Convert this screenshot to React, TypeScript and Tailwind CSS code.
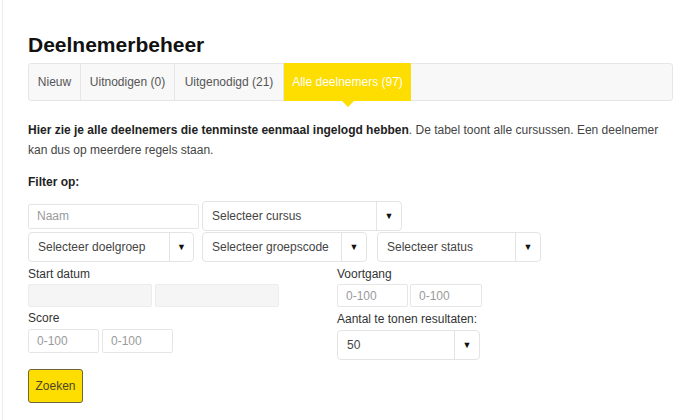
const font = { fontFamily: '"Liberation Sans", Arial, sans-serif' };

function Caret() {
  return <span className="text-[9px] leading-none text-[#111]">▼</span>;
}

function Select({ label, w, h = 'h-[30px]', caret = 'w-[25px]' }: { label: string; w: string; h?: string; caret?: string }) {
  return (
    <div className={`${w} ${h} flex items-stretch bg-white border border-[#e4e4e4] rounded-[4px] text-[#444]`}>
      <div className="flex-1 flex items-center pl-[9px]">{label}</div>
      <div className={`${caret} flex items-center justify-center border-l border-[#e4e4e4]`}>
        <Caret />
      </div>
    </div>
  );
}

function Field({ w, h, placeholder, gray }: { w: string; h: string; placeholder?: string; gray?: boolean }) {
  return (
    <div
      className={`${w} ${h} flex items-center pl-[8px] border rounded-[2px] text-[#9a9a9a] ${
        gray ? 'bg-[#f5f5f5] border-[#ececec]' : 'bg-white border-[#e6e6e6]'
      }`}
    >
      {placeholder}
    </div>
  );
}

const tabs = [
  { label: 'Nieuw', w: 'w-[52px]' },
  { label: 'Uitnodigen (0)', w: 'w-[94px]' },
  { label: 'Uitgenodigd (21)', w: 'w-[109px]' },
];

export default function App() {
  return (
    <div className="min-h-[420px] bg-white border-l border-[#ececec] ml-[2px]" style={font}>
      <div className="pl-[25px] pt-[32px] w-[670px] text-[12px] text-[#333]">
        <h1 className="text-[21px] leading-[25px] font-bold text-[#111]">Deelnemerbeheer</h1>

        {/* tabs */}
        <div className="mt-[6px] h-[38px] flex bg-[#f8f8f8] border border-[#e6e6e6] rounded-[3px]">
          {tabs.map((t) => (
            <div
              key={t.label}
              className={`${t.w} flex items-center justify-center border-r border-[#e6e6e6] text-[#555]`}
            >
              {t.label}
            </div>
          ))}
          <div className="relative w-[127px] -my-px flex items-center justify-center bg-[#fedd00] text-white">
            Alle deelnemers (97)
            <span className="absolute left-1/2 -translate-x-1/2 top-full border-x-[6px] border-x-transparent border-t-[6px] border-t-[#fedd00]" />
          </div>
        </div>

        <p className="mt-[19px] leading-[20px] text-[#444]">
          <b className="text-[#222]">Hier zie je alle deelnemers die tenminste eenmaal ingelogd hebben</b>. De tabel
          toont alle cursussen. Een deelnemer kan dus op meerdere regels staan.
        </p>

        <div className="mt-[12px] leading-[20px] font-bold text-[#222]">Filter op:</div>

        {/* row 1 */}
        <div className="mt-[9px] flex items-center gap-[3px]">
          <Field w="w-[171px]" h="h-[25px]" placeholder="Naam" />
          <Select label="Selecteer cursus" w="w-[200px]" />
        </div>

        {/* row 2 */}
        <div className="mt-[1px] flex items-center">
          <Select label="Selecteer doelgroep" w="w-[166px]" caret="w-[24px]" />
          <div className="ml-[8px]">
            <Select label="Selecteer groepscode" w="w-[165px]" />
          </div>
          <div className="ml-[10px]">
            <Select label="Selecteer status" w="w-[164px]" />
          </div>
        </div>

        {/* ranges */}
        <div className="mt-[1px] flex">
          <div className="w-[308px]">
            <div className="h-[21px] flex items-center">Start datum</div>
            <div className="flex gap-[3px]">
              <Field w="w-[124px]" h="h-[23px]" gray />
              <Field w="w-[124px]" h="h-[23px]" gray />
            </div>
            <div className="h-[22px] flex items-center">Score</div>
            <div className="flex gap-[3px]">
              <Field w="w-[71px]" h="h-[24px]" placeholder="0-100" />
              <Field w="w-[71px]" h="h-[24px]" placeholder="0-100" />
            </div>
          </div>
          <div>
            <div className="h-[21px] flex items-center pl-[1px]">Voortgang</div>
            <div className="flex gap-[2px] pl-[1px]">
              <Field w="w-[71px]" h="h-[23px]" placeholder="0-100" />
              <Field w="w-[72px]" h="h-[23px]" placeholder="0-100" />
            </div>
            <div className="h-[23px] flex items-center pl-[1px]">Aantal te tonen resultaten:</div>
            <div className="pl-[1px]">
              <Select label="50" w="w-[143px]" />
            </div>
          </div>
        </div>

        <button className="mt-[9px] h-[34px] w-[55px] bg-[#fedd00] border border-[#6e6638] rounded-[3px] text-[#4a4628]">
          Zoeken
        </button>
      </div>
    </div>
  );
}
